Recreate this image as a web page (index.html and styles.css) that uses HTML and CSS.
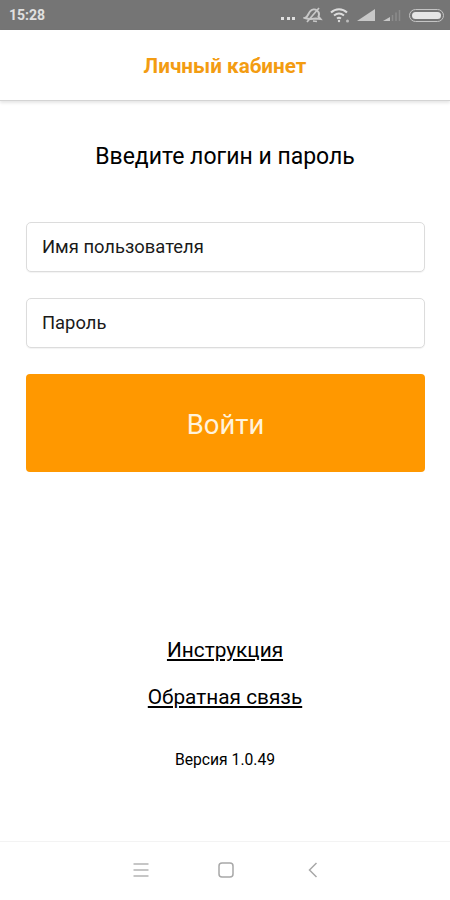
FILE: index.html
```html
<!DOCTYPE html>
<html lang="ru">
<head>
    <meta charset="UTF-8">
    <meta name="viewport" content="width=device-width, initial-scale=1.0">
    <title>Личный кабинет</title>
    <link rel="stylesheet" href="styles.css">
</head>
<body>
    <div class="status-bar">
        <span class="status-time">15:28</span>
        <div class="status-icons">
            <span class="status-dots"><i></i><i></i><i></i></span>
            <svg class="icon-alarm" width="20" height="16" viewBox="0 0 20 16" fill="none" stroke="#c8c8c8" stroke-width="2">
                <path d="M2 11 C5 10 5 7 7 4.500 C9 2 12 2 14 3.500 C16 5 16.500 7 15.500 9.500 L17.500 12 L13 11.500 C10 12 6 12.500 2 11 Z"/>
                <path d="M4 15 L16 1" stroke-width="1.700"/>
                <path d="M10 14 L14 14.500" stroke-width="1.500"/>
            </svg>
            <svg class="icon-wifi" width="20" height="16" viewBox="0 0 20 16" fill="none" stroke="#dcdcdc" stroke-width="2">
                <path d="M1 5.500 C5.500 1 12.500 1 17 5.500"/>
                <path d="M4 8.500 C7 6 11 6 14 8.500"/>
                <path d="M7 11.500 C8.500 10.500 9.500 10.500 11 11.500"/>
                <circle cx="9" cy="14" r="1.200" fill="#dcdcdc" stroke="none"/>
                <circle cx="17.500" cy="14" r="1.500" fill="#bdbdbd" stroke="none"/>
            </svg>
            <svg class="icon-signal" width="19" height="14" viewBox="0 0 19 14">
                <path d="M0 13 L18 1 V13 Z" fill="#c8c8c8"/>
            </svg>
            <svg class="icon-signal-weak" width="19" height="14" viewBox="0 0 19 14">
                <path d="M0 13 L7 9 V13 Z" fill="#c8c8c8"/>
                <path d="M9.500 13 V7 M13 13 V4.500 M16.500 13 V2" stroke="#8c8c8c" stroke-width="1.500"/>
            </svg>
            <span class="battery"><span class="battery-fill"></span></span>
        </div>
    </div>

    <header class="top-bar">
        <h1 class="top-title">Личный кабинет</h1>
    </header>

    <main class="content">
        <h2 class="login-title">Введите логин и пароль</h2>
        <form class="login-form">
            <input class="field" type="text" placeholder="Имя пользователя">
            <input class="field" type="password" placeholder="Пароль">
            <button class="login-button" type="button">Войти</button>
        </form>
        <div class="links">
            <a href="#" class="link">Инструкция</a>
            <a href="#" class="link">Обратная связь</a>
        </div>
        <p class="version">Версия 1.0.49</p>
    </main>

    <nav class="nav-bar">
        <svg width="16" height="16" viewBox="0 0 16 16" stroke="#b4b4b4" stroke-width="1.500">
            <path d="M0.500 2 H15.500 M0.500 8 H15.500 M0.500 14 H15.500"/>
        </svg>
        <svg width="16" height="16" viewBox="0 0 16 16" fill="none" stroke="#a8a8a8" stroke-width="1.500">
            <rect x="1" y="1" width="14" height="14" rx="3"/>
        </svg>
        <svg class="nav-back" width="10" height="16" viewBox="0 0 10 16" fill="none" stroke="#a8a8a8" stroke-width="1.500">
            <path d="M8.500 1 L1.500 8 L8.500 15"/>
        </svg>
    </nav>
</body>
</html>
```

FILE: styles.css
```css
* {
    margin: 0;
    padding: 0;
    box-sizing: border-box;
}

body {
    width: 450px;
    height: 900px;
    overflow: hidden;
    display: flex;
    flex-direction: column;
    font-family: Roboto, sans-serif;
    background-color: #ffffff;
    color: #000000;
}

.status-bar {
    height: 30px;
    flex-shrink: 0;
    display: flex;
    align-items: center;
    justify-content: space-between;
    padding: 0 6px 0 9px;
    background-color: #757575;
}

.status-time {
    font-size: 14px;
    font-weight: 700;
    color: #e0e0e0;
}

.status-icons {
    display: flex;
    align-items: center;
    gap: 7px;
}

.status-dots {
    display: flex;
    gap: 2.500px;
    margin: 6px 1px 0 0;
}

.status-dots i {
    width: 3px;
    height: 3px;
    background-color: #e0e0e0;
}

.battery {
    width: 35px;
    height: 13px;
    padding: 2px;
    border: 1px solid #c4c4c4;
    border-radius: 7px;
}

.battery-fill {
    display: block;
    height: 100%;
    background-color: #e6e6e6;
    border-radius: 4px;
}

.top-bar {
    height: 71px;
    flex-shrink: 0;
    display: flex;
    align-items: center;
    justify-content: center;
    padding-top: 2px;
    border-bottom: 1px solid #d4d4d4;
    box-shadow: 0 2px 3px rgba(0, 0, 0, 0.1);
}

.top-title {
    font-size: 20.7px;
    font-weight: 700;
    color: #f39c12;
}

.content {
    flex: 1;
    display: flex;
    flex-direction: column;
    align-items: center;
}

.login-title {
    margin-top: 42px;
    font-size: 23px;
    line-height: 28px;
    font-weight: 400;
}

.login-form {
    width: 399px;
    margin-top: 51px;
    margin-left: 1px;
    display: flex;
    flex-direction: column;
    gap: 26px;
}

.field {
    height: 50px;
    padding: 0 15px 2px 15px;
    font-family: Roboto, sans-serif;
    font-size: 18.4px;
    background-color: #ffffff;
    border: 1px solid #dcdcdc;
    border-radius: 5px;
    box-shadow: 0 1px 1px rgba(0, 0, 0, 0.05);
}

.field::placeholder {
    color: #1a1a1a;
    opacity: 1;
}

.login-button {
    height: 98px;
    padding-top: 3px;
    font-family: Roboto, sans-serif;
    font-size: 27.4px;
    color: #fff3dc;
    background-color: #ff9800;
    border: none;
    border-radius: 4px;
}

.links {
    margin-top: 167px;
    display: flex;
    flex-direction: column;
    align-items: center;
    gap: 24px;
}

.link {
    font-size: 20.8px;
    line-height: 23px;
    color: #000000;
    text-decoration: underline;
}

.version {
    margin-top: 42px;
    font-size: 15.7px;
    line-height: 18px;
}

.nav-bar {
    height: 59px;
    flex-shrink: 0;
    display: flex;
    align-items: center;
    gap: 69px;
    padding: 0 0 2px 133px;
    border-top: 1px solid #f3f3f3;
}

.nav-back {
    margin-left: 5px;
}
```
